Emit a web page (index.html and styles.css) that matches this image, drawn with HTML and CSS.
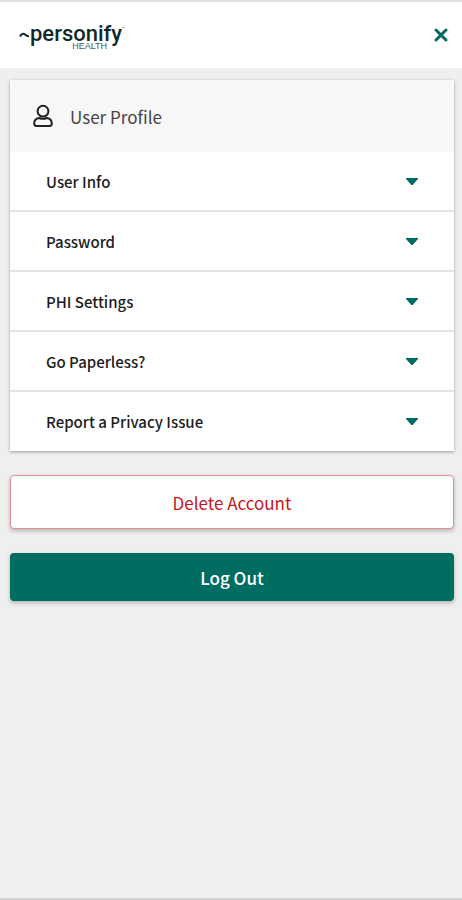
FILE: index.html
```html
<!DOCTYPE html>
<html lang="en">
<head>
<meta charset="utf-8">
<meta name="viewport" content="width=device-width, initial-scale=1">
<title>User Profile</title>
<link rel="stylesheet" href="styles.css">
</head>
<body>
<header class="topbar">
  <div class="logo">
    <svg class="logo-mark" viewBox="0 0 11 6" aria-hidden="true"><path d="M1 4.500C2.600 1.400 4.400 1.200 6 2.600S8.600 4.400 10 4.200"/></svg>
    <div class="logo-words">
      <span class="logo-name">personify</span>
      <span class="logo-sub">HEALTH</span>
    </div>
    <svg class="logo-tm" viewBox="0 0 3 2" aria-hidden="true"><path d="M0 0H3V1H0Z"/></svg>
  </div>
  <button class="close" type="button" aria-label="Close">
    <svg viewBox="0 0 16 16" aria-hidden="true"><path d="M3 3l10 10M13 3l-10 10"/></svg>
  </button>
</header>
<main class="content">
  <section class="card">
    <h1 class="card-title">
      <svg class="user" viewBox="0 0 20 24" aria-hidden="true"><circle cx="10" cy="7.2" r="5.4"/><path d="M6.200 14C3 14.400 1.200 16.600 1.200 19.600C1.200 21.400 2 22 3.400 22H16.600C18 22 18.800 21.400 18.800 19.600C18.800 16.600 17 14.400 13.800 14C11.500 15 8.500 15 6.200 14Z"/></svg>
      User Profile
    </h1>
    <button class="row" type="button">User Info<svg class="caret" viewBox="0 0 12 7" aria-hidden="true"><path d="M0 0H12V1L6.600 7H5.400L0 1Z"/></svg></button>
    <button class="row" type="button">Password<svg class="caret" viewBox="0 0 12 7" aria-hidden="true"><path d="M0 0H12V1L6.600 7H5.400L0 1Z"/></svg></button>
    <button class="row" type="button">PHI Settings<svg class="caret" viewBox="0 0 12 7" aria-hidden="true"><path d="M0 0H12V1L6.600 7H5.400L0 1Z"/></svg></button>
    <button class="row" type="button">Go Paperless?<svg class="caret" viewBox="0 0 12 7" aria-hidden="true"><path d="M0 0H12V1L6.600 7H5.400L0 1Z"/></svg></button>
    <button class="row" type="button">Report a Privacy Issue<svg class="caret" viewBox="0 0 12 7" aria-hidden="true"><path d="M0 0H12V1L6.600 7H5.400L0 1Z"/></svg></button>
  </section>
  <button class="action delete" type="button">Delete Account</button>
  <button class="action logout" type="button">Log Out</button>
</main>
</body>
</html>
```
FILE: styles.css
```css
* {
  box-sizing: border-box;
}

body {
  margin: 0;
  min-height: 100vh;
  background: #efefef;
  border-top: 2px solid #dfe1e1;
  border-bottom: 2px solid #d2d2d2;
  color: #1c1c1c;
  font-family: "Noto Sans CJK SC", "Open Sans", sans-serif;
}

button {
  font: inherit;
  color: inherit;
  cursor: pointer;
}

.topbar {
  display: flex;
  align-items: center;
  justify-content: space-between;
  height: 66px;
  padding: 0 13px 0 19px;
  background: #ffffff;
}

.logo {
  display: flex;
  align-items: center;
  color: #12282c;
}

.logo-mark {
  width: 11px;
  height: 6px;
  fill: none;
  stroke: currentColor;
  stroke-width: 2;
}

.logo-words {
  display: flex;
  flex-direction: column;
}

.logo-name {
  font-family: Roboto, "Liberation Sans", sans-serif;
  font-size: 22px;
  font-weight: 500;
  line-height: 22px;
}

.logo-sub {
  align-self: flex-end;
  margin-right: 15px;
  font-family: "Liberation Sans", sans-serif;
  font-size: 9px;
  line-height: 2px;
  color: #4c5658;
}

.logo-tm {
  align-self: flex-start;
  width: 3px;
  height: 2px;
  margin-top: 4px;
  fill: #a9b1b2;
}

.close {
  display: flex;
  padding: 0;
  border: 0;
  background: none;
  color: #006b60;
}

.close svg {
  width: 16px;
  height: 16px;
  fill: none;
  stroke: currentColor;
  stroke-width: 3;
  stroke-linecap: round;
}

.content {
  display: flex;
  flex-direction: column;
  gap: 24px;
  padding: 12px 8px 24px 10px;
}

.card {
  background: #ffffff;
  box-shadow: 0 1px 3px rgba(0, 0, 0, 0.35);
}

.card-title {
  display: flex;
  align-items: center;
  gap: 17px;
  height: 72px;
  margin: 0;
  padding: 0 23px;
  background: #f7f7f7;
  color: #444444;
  font-size: 17px;
  font-weight: 400;
}

.user {
  width: 20px;
  height: 24px;
  fill: none;
  stroke: #222222;
  stroke-width: 2;
}

.row {
  display: flex;
  align-items: center;
  justify-content: space-between;
  width: 100%;
  height: 60px;
  padding: 0 36px;
  border: 0;
  border-bottom: 2px solid #e4e4e4;
  background: none;
  font-size: 15px;
  font-weight: 500;
  text-align: left;
}

.row:last-child {
  height: 59px;
  border-bottom: 0;
}

.caret {
  width: 12px;
  height: 7px;
  fill: #006b60;
}

.action {
  width: 100%;
  border: 0;
  border-radius: 4px;
  font-size: 17px;
  box-shadow: 0 2px 4px rgba(0, 0, 0, 0.25);
}

.delete {
  height: 54px;
  border: 1px solid #dc8f92;
  background: #ffffff;
  color: #c5161d;
}

.logout {
  height: 48px;
  background: #006d63;
  color: #ffffff;
  font-weight: 500;
}
```
